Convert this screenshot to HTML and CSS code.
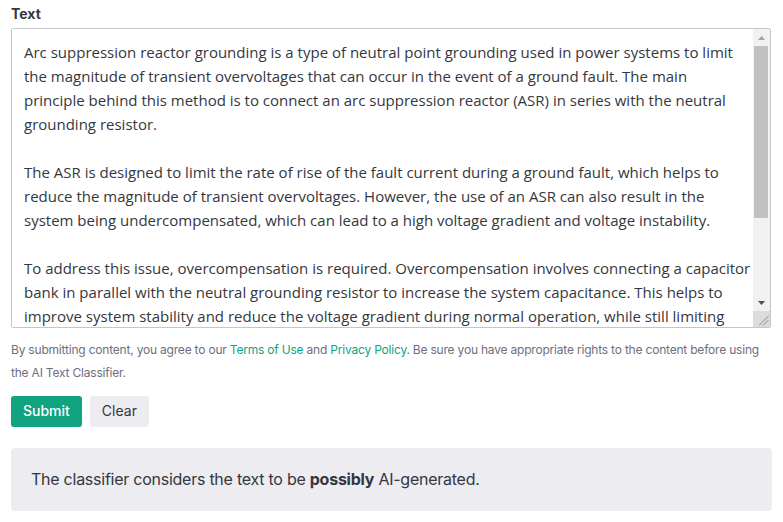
FILE: index.html
```html
<!DOCTYPE html>
<html>
<head>
<meta charset="utf-8">
<link rel="stylesheet" href="styles.css">
</head>
<body>
<div class="page">
  <label class="label" for="t">Text</label>
  <div class="field">
    <textarea id="t" class="input">Arc suppression reactor grounding is a type of neutral point grounding used in power systems to limit
the magnitude of transient overvoltages that can occur in the event of a ground fault. The main
principle behind this method is to connect an arc suppression reactor (ASR) in series with the neutral
grounding resistor.

The ASR is designed to limit the rate of rise of the fault current during a ground fault, which helps to
reduce the magnitude of transient overvoltages. However, the use of an ASR can also result in the
system being undercompensated, which can lead to a high voltage gradient and voltage instability.

To address this issue, overcompensation is required. Overcompensation involves connecting a capacitor
bank in parallel with the neutral grounding resistor to increase the system capacitance. This helps to
improve system stability and reduce the voltage gradient during normal operation, while still limiting
the magnitude of transient overvoltages during a ground fault.

In summary, arc suppression reactor grounding with overcompensation is an effective method for
limiting transient overvoltages and maintaining system stability in power systems.</textarea>
    <div class="scrollbar" aria-hidden="true">
      <div class="sb-btn">
        <svg width="7" height="4" viewBox="0 0 7 4"><path d="M0 4 L3.5 0 L7 4 Z" fill="#a3a3a3"/></svg>
      </div>
      <div class="sb-track"><div class="sb-thumb"></div></div>
      <div class="sb-btn">
        <svg width="7" height="4" viewBox="0 0 7 4"><path d="M0 0 L3.5 4 L7 0 Z" fill="#505050"/></svg>
      </div>
      <div class="sb-corner">
        <svg width="17" height="16" viewBox="0 0 17 16"><path d="M6 14.5 L15.5 5 M10 14.5 L15.5 9" stroke="#8a8a8a" stroke-width="1" fill="none"/></svg>
      </div>
    </div>
  </div>
  <p class="legal">By submitting content, you agree to our <a href="#">Terms of Use</a> and <a href="#">Privacy Policy</a>. Be sure you have appropriate rights to the content before using<br>the AI Text Classifier.</p>
  <div class="actions">
    <button class="btn btn-primary">Submit</button>
    <button class="btn btn-secondary">Clear</button>
  </div>
  <div class="result">The classifier considers the text to be <strong>possibly</strong> AI-generated.</div>
</div>
</body>
</html>
```
FILE: styles.css
```css
html, body {
  margin: 0;
  padding: 0;
  background: #fff;
}
.page {
  padding: 4px 11px 0 11px;
  font-family: Inter, "Liberation Sans", sans-serif;
  color: #353740;
}
.label {
  display: block;
  font-weight: 700;
  font-size: 14px;
  line-height: 20px;
  margin-bottom: 4px;
}
.field {
  display: flex;
  box-sizing: border-box;
  width: 760px;
  height: 300px;
  border: 1px solid #c5c5d2;
  border-radius: 2px;
  overflow: hidden;
}
.input {
  flex: 1;
  min-width: 0;
  box-sizing: border-box;
  height: 100%;
  margin: 0;
  padding: 11px 12px;
  border: none;
  font-family: "Open Sans", sans-serif;
  font-size: 15px;
  line-height: 24px;
  color: #353740;
  overflow: hidden;
  white-space: pre;
  resize: none;
  outline: none;
  background: #fff;
}
.scrollbar {
  width: 17px;
  display: flex;
  flex-direction: column;
  background: #f1f1f1;
}
.sb-btn {
  height: 17px;
  flex: none;
  display: flex;
  align-items: center;
  justify-content: center;
}
.sb-btn svg {
  display: block;
}
.sb-track {
  flex: 1;
  padding: 0 2px 0 1px;
}
.sb-thumb {
  height: 172px;
  background: #c1c1c1;
}
.sb-corner {
  height: 16px;
  flex: none;
  background: #dcdcdc;
}
.sb-corner svg {
  display: block;
}
.legal {
  margin: 10px 0 0 0;
  font-size: 12px;
  line-height: 23px;
  letter-spacing: -0.2px;
  color: #6e6e80;
  white-space: nowrap;
}
.legal a {
  color: #10a37f;
  text-decoration: none;
}
.actions {
  display: flex;
  gap: 8px;
  margin-top: 12px;
}
.btn {
  font-family: Inter, "Liberation Sans", sans-serif;
  font-size: 14px;
  line-height: 20px;
  padding: 5px 12px 6px;
  border: none;
  border-radius: 3px;
  cursor: pointer;
}
.btn-primary {
  background: #10a37f;
  color: #fff;
  font-weight: 500;
}
.btn-secondary {
  background: #ececf1;
  color: #353740;
}
.result {
  margin-top: 21px;
  background: #ececf1;
  border-radius: 4px;
  padding: 20px 20px;
  font-size: 16px;
  line-height: 23px;
  letter-spacing: -0.25px;
  color: #353740;
}
```
